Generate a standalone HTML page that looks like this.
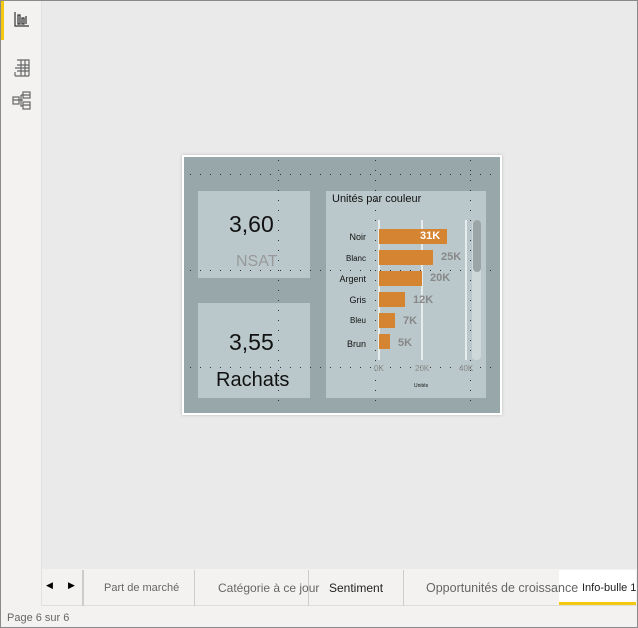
<!DOCTYPE html><html><head><style>
body{margin:0;width:638px;height:628px;position:relative;overflow:hidden;font-family:"Liberation Sans",sans-serif;background:#eaeaea}
div{position:absolute;box-sizing:border-box}
.t{font-size:12px;color:#666;top:12px;white-space:nowrap}
.l{font-size:9px;color:#111;text-align:right;width:40px;left:326px}
.b{background:#d58431;left:379px;height:15px}
.v{font-size:11px;color:#888;font-weight:bold}
.h{height:1px;left:190px;width:305px;background:linear-gradient(90deg,#333 1px,transparent 1px) 0 0/10px 1px repeat-x}
.w{width:1px;top:160px;height:250px;background:linear-gradient(180deg,#333 1px,transparent 1px) 0 0/1px 10px repeat-y}
</style></head><body>
<div style="left:0;top:0;width:638px;height:628px;border:1px solid #8a8a8a;z-index:9"></div>
<div style="left:0;top:0;width:42px;height:606px;background:#f3f2f1;border-right:1px solid #e1e1e1"></div>
<div style="left:1px;top:0;width:3px;height:40px;background:#f2c811"></div>
<svg style="position:absolute;left:12px;top:10px" width="20" height="100" fill="none" stroke="#333" stroke-width="1.2">
<path d="M3 2v14h14M6 5v9h2V5zM10 8v6h2V8zM14 6v8"/>
<g stroke="#666"><path d="M3 58h14M5 50h12v16M5 55h12M5 61h12M9 50v16M13 50v16M3 66h14M3 62v4"/></g>
<g stroke="#666"><rect x="1" y="87" width="6" height="7"/><rect x="11" y="82" width="7" height="6"/><rect x="11" y="92" width="7" height="7"/><path d="M7 90h4M9 85v11h2M9 85h2M1 90h6M11 85h7M11 95h7"/></g>
</svg>
<div style="left:182px;top:155px;width:320px;height:260px;background:#98a8aa;border:2px solid #fff;box-shadow:0 0 3px #bbb"></div>
<div style="left:198px;top:191px;width:112px;height:87px;background:#bac8cb"></div>
<div style="left:198px;top:303px;width:112px;height:95px;background:#bac8cb"></div>
<div style="left:326px;top:191px;width:160px;height:207px;background:#bac8cb"></div>
<div class="h" style="top:174px"></div><div class="h" style="top:270px"></div><div class="h" style="top:367px"></div>
<div class="w" style="left:278px"></div><div class="w" style="left:375px"></div><div class="w" style="left:470px"></div>
<div style="left:229px;top:211px;font-size:23px;color:#111">3,60</div>
<div style="left:236px;top:253px;font-size:16px;color:#999">NSAT</div>
<div style="left:229px;top:329px;font-size:23px;color:#111">3,55</div>
<div style="left:216px;top:369px;font-size:20px;color:#111">Rachats</div>
<div style="left:332px;top:193px;font-size:11px;color:#111">Unités par couleur</div>
<div style="left:378px;top:220px;width:2px;height:140px;background:#e6ecec"></div>
<div style="left:421px;top:220px;width:2px;height:140px;background:#e6ecec"></div>
<div style="left:465px;top:220px;width:2px;height:140px;background:#e6ecec"></div>
<div style="left:472px;top:220px;width:9px;height:140px;background:#cfd8d9;border-radius:4px"></div>
<div style="left:473px;top:220px;width:8px;height:52px;background:#9ba5a7;border-radius:4px"></div>
<div class="l" style="top:232px">Noir</div><div class="b" style="top:229px;width:68px"></div><div class="v" style="left:420px;top:230px;color:#fff">31K</div>
<div class="l" style="top:254px;font-size:8px">Blanc</div><div class="b" style="top:250px;width:54px"></div><div class="v" style="left:441px;top:251px">25K</div>
<div class="l" style="top:274px">Argent</div><div class="b" style="top:271px;width:43px"></div><div class="v" style="left:430px;top:272px">20K</div>
<div class="l" style="top:295px">Gris</div><div class="b" style="top:292px;width:26px"></div><div class="v" style="left:413px;top:294px">12K</div>
<div class="l" style="top:316px;font-size:8px">Bleu</div><div class="b" style="top:313px;width:16px"></div><div class="v" style="left:403px;top:315px">7K</div>
<div class="l" style="top:339px">Brun</div><div class="b" style="top:334px;width:11px"></div><div class="v" style="left:398px;top:337px">5K</div>
<div style="left:374px;top:364px;font-size:8px;color:#888">0K</div>
<div style="left:415px;top:364px;font-size:8px;color:#888">20K</div>
<div style="left:459px;top:364px;font-size:8px;color:#888">40K</div>
<div style="left:414px;top:383px;font-size:5px;color:#111">Unités</div>
<div style="left:42px;top:569px;width:596px;height:37px;background:#f3f2f1;border-bottom:1px solid #ddd"></div>
<div style="left:46px;top:580px;font-size:9px">◀</div><div style="left:68px;top:580px;font-size:9px">▶</div>
<div style="left:82px;top:570px;width:2px;height:36px;background:#ccc"></div>
<div style="left:194px;top:570px;width:1px;height:36px;background:#ccc"></div>
<div style="left:308px;top:570px;width:1px;height:36px;background:#ccc"></div>
<div style="left:403px;top:570px;width:1px;height:36px;background:#ccc"></div>
<div style="left:559px;top:570px;width:77px;height:35px;background:#fff;border-bottom:3px solid #f2c811"></div>
<div class="t" style="left:104px;top:582px;font-size:11px">Part de marché</div>
<div class="t" style="left:218px;top:581px">Catégorie à ce jour</div>
<div class="t" style="left:329px;top:581px;color:#222">Sentiment</div>
<div class="t" style="left:426px;top:581px;font-size:12.5px">Opportunités de croissance</div>
<div class="t" style="left:582px;top:582px;color:#222;font-size:11px">Info-bulle 1</div>
<div style="left:0;top:606px;width:638px;height:22px;background:#f3f2f1"></div>
<div style="left:7px;top:612px;font-size:11px;color:#666">Page 6 sur 6</div>
</body></html>
